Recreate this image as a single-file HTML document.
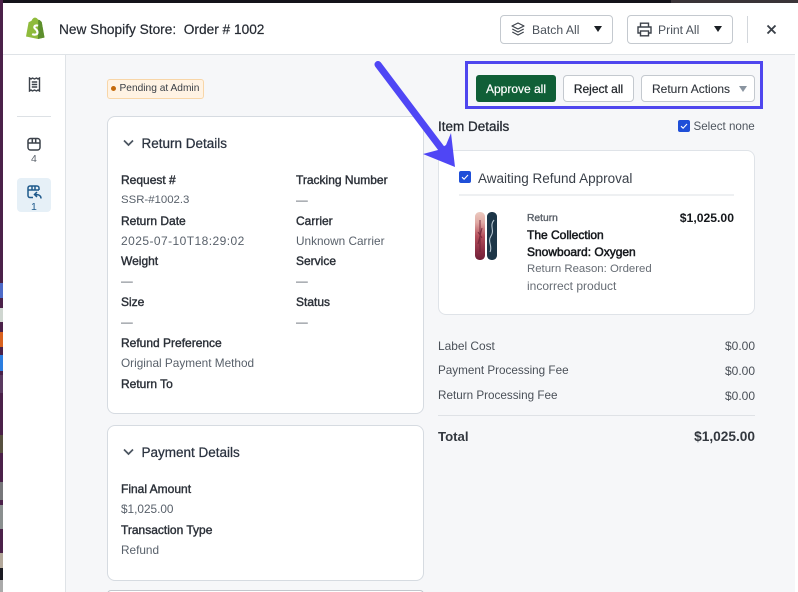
<!DOCTYPE html>
<html>
<head>
<meta charset="utf-8">
<style>
html,body{margin:0;padding:0;width:798px;height:592px;overflow:hidden;background:#fff}
body{position:relative;font-family:"Liberation Sans",Arial,sans-serif;color:#20252c}
.a{position:absolute;white-space:nowrap}
.t{position:absolute;white-space:nowrap;line-height:16px;font-size:12px}
.l{color:#2b3038;font-size:12px;-webkit-text-stroke:.4px #2b3038}
.v{color:#59616b;font-size:11.800px}
.card{position:absolute;background:#fff;border:1px solid #d6dbe1;border-radius:8px;box-sizing:border-box}
.btn{position:absolute;box-sizing:border-box;background:#fff;border:1px solid #c4c9cf;border-radius:4px}
.h{font-size:13.500px;color:#2b3340;font-weight:400;-webkit-text-stroke:.25px #2b3340}
.b{color:#15181c;font-size:12px;-webkit-text-stroke:.5px #15181c}
</style>
</head>
<body>
<!-- backdrop strips -->
<div class="a" style="left:0;top:0;width:798px;height:3px;background:#14131a"></div>
<div class="a" style="left:671px;top:0;width:127px;height:3px;background:#3a3438"></div>
<div class="a" style="left:0;top:0;width:3px;height:592px;background:#4b2149"></div>
<div class="a" style="left:0;top:283px;width:3px;height:15px;background:#4e6bc8"></div>
<div class="a" style="left:0;top:308px;width:3px;height:14px;background:#cfd6d0"></div>
<div class="a" style="left:0;top:332px;width:3px;height:15px;background:#d9621e"></div>
<div class="a" style="left:0;top:355px;width:3px;height:16px;background:#2c7ee0"></div>
<div class="a" style="left:0;top:375px;width:3px;height:18px;background:#5a3a60"></div>
<div class="a" style="left:0;top:435px;width:3px;height:18px;background:#57503f"></div>
<div class="a" style="left:0;top:482px;width:3px;height:18px;background:#77777a"></div>
<div class="a" style="left:0;top:505px;width:3px;height:24px;background:#8a8f8f"></div>
<div class="a" style="left:0;top:553px;width:3px;height:15px;background:#b3a89a"></div>
<div class="a" style="left:0;top:568px;width:3px;height:12px;background:#1a1a22"></div>
<div class="a" style="left:0;top:580px;width:3px;height:12px;background:#aaa"></div>

<!-- modal -->
<div class="a" style="left:3px;top:3px;width:792px;height:600px;background:#f6f7f9;border-radius:6px 6px 0 0;overflow:hidden">
  <div class="a" style="left:0;top:0;width:792px;height:51px;background:#fff;border-bottom:1px solid #dfe3e7;box-sizing:content-box"></div>
  <div class="a" style="left:0;top:52px;width:62px;height:560px;background:#fff;border-right:1px solid #dfe3e7"></div>
</div>

<!-- header -->
<svg class="a" style="left:25px;top:17px" width="21" height="23" viewBox="0 0 21 23">
  <path d="M1 19.500 3.600 5.200C5 4.600 6 4.200 6.600 3.600 7.600 1.200 9 .4 10.300 .6 11.600 .8 12.600 1.600 13.100 2.800L14.600 3 16.700 5 19.500 20.500 13 22Z" fill="#8fbb3c"/>
  <path d="M13.200 2.800 14.700 3.100 16.700 5 19.500 20.500 13 22Z" fill="#5d8f2d"/>
  <path d="M13 8.800C12 8.300 9.600 8.200 9.300 10.100 9 12 12.800 12.300 12.500 15.600 12.300 17.600 9.600 18.300 7.200 17.100" fill="none" stroke="#fff" stroke-width="2.100"/>
</svg>
<div class="t" style="left:59px;top:21px;font-size:13.700px;line-height:18px;color:#262b33;-webkit-text-stroke:.2px #262b33">New Shopify Store:&nbsp; Order # 1002</div>

<div class="btn" style="left:500px;top:15px;width:113px;height:29px"></div>
<svg class="a" style="left:511px;top:22px" width="14" height="14" viewBox="0 0 14 14" fill="none" stroke="#3c424a" stroke-width="1.200" stroke-linejoin="round"><path d="M7 1 13 4 7 7 1 4Z"/><path d="M1.300 7 7 10 12.700 7"/><path d="M1.300 10 7 13 12.700 10"/></svg>
<div class="t" style="left:532px;top:22px;font-size:12.200px;color:#4b525b">Batch All</div>
<div class="a" style="left:594px;top:26px;width:0;height:0;border-left:4.500px solid transparent;border-right:4.500px solid transparent;border-top:6px solid #1b1f24"></div>

<div class="btn" style="left:627px;top:15px;width:106px;height:29px"></div>
<svg class="a" style="left:637px;top:22px" width="15" height="15" viewBox="0 0 15 15" fill="none" stroke="#3c424a" stroke-width="1.400"><path d="M3.500 5V1.200H11.500V5"/><path d="M3.500 11H1V5H14V11H11.500"/><rect x="3.500" y="9" width="8" height="4.800"/></svg>
<div class="t" style="left:658px;top:22px;font-size:12.200px;color:#4b525b">Print All</div>
<div class="a" style="left:714px;top:26px;width:0;height:0;border-left:4.500px solid transparent;border-right:4.500px solid transparent;border-top:6px solid #1b1f24"></div>

<div class="a" style="left:747px;top:16px;width:1px;height:27px;background:#d3d7dc"></div>
<svg class="a" style="left:766px;top:24px" width="11" height="11" viewBox="0 0 11 11" stroke="#3a4048" stroke-width="1.900" fill="none"><path d="M1.500 1.500 9.500 9.500M9.500 1.500 1.500 9.500"/></svg>

<!-- sidebar -->
<svg class="a" style="left:28px;top:77px" width="13" height="15" viewBox="0 0 13 15" fill="none" stroke="#3c424a" stroke-width="1.400"><path d="M1.500 1 3 2 4.500 1 6.500 2 8.500 1 10 2 11.500 1V14L10 13 8.500 14 6.500 13 4.500 14 3 13 1.500 14Z"/><path d="M3.800 5H9.200M3.800 7.500H9.200M3.800 10H9.200"/></svg>
<div class="a" style="left:17px;top:116px;width:34px;height:1px;background:#dde1e5"></div>
<svg class="a" style="left:27px;top:137px" width="14" height="14" viewBox="0 0 14 14" fill="none" stroke="#3c424a" stroke-width="1.500"><rect x="1" y="1.500" width="12" height="11.500" rx="2.500"/><path d="M1 6H13M5.300 1.500V6M8.700 1.500V6"/></svg>
<div class="t" style="left:31px;top:152px;font-size:10.500px;line-height:14px;color:#5c636c">4</div>
<div class="a" style="left:17px;top:178px;width:34px;height:34px;background:#e6f0f7;border-radius:4px"></div>
<svg class="a" style="left:27px;top:185px" width="15" height="15" viewBox="0 0 15 15" fill="none" stroke="#1f5a8c" stroke-width="1.500"><path d="M6 12.500H3A2 2 0 0 1 1 10.500V3A2 2 0 0 1 3 1H10A2 2 0 0 1 12 3V5"/><path d="M1 5H12M5 1V5M8 1V5"/><path d="M14 13.500C14 10.500 12 9.500 8 9.500M10 7 7.500 9.500 10 12"/></svg>
<div class="t" style="left:31px;top:200px;font-size:10.500px;line-height:14px;color:#1f5a8c">1</div>

<!-- pending badge -->
<div class="a" style="left:107px;top:79px;width:97px;height:20px;box-sizing:border-box;background:#fff3e4;border:1px solid #f8d6a8;border-radius:3px"></div>
<div class="a" style="left:111px;top:86px;width:5px;height:5px;border-radius:50%;background:#c46a0c"></div>
<div class="t" style="left:119.500px;top:81px;font-size:10.200px;color:#3a3f46">Pending at Admin</div>

<!-- Return details card -->
<div class="card" style="left:107px;top:116px;width:317px;height:298px"></div>
<svg class="a" style="left:123px;top:139px" width="11" height="8" viewBox="0 0 11 8" fill="none" stroke="#4b5560" stroke-width="1.700"><path d="M1 1.500 5.500 6 10 1.500"/></svg>
<div class="t h" style="left:141.500px;top:136px">Return Details</div>
<div class="t l" style="left:121px;top:172px">Request #</div>
<div class="t v" style="left:121px;top:192px;font-size:11.400px">SSR-#1002.3</div>
<div class="t l" style="left:121px;top:213px">Return Date</div>
<div class="t v" style="left:121px;top:233px;font-size:12px;letter-spacing:.44px">2025-07-10T18:29:02</div>
<div class="t l" style="left:121px;top:253px">Weight</div>
<div class="t v" style="left:121px;top:273px">—</div>
<div class="t l" style="left:121px;top:294px">Size</div>
<div class="t v" style="left:121px;top:314px">—</div>
<div class="t l" style="left:121px;top:335px">Refund Preference</div>
<div class="t v" style="left:121px;top:355px">Original Payment Method</div>
<div class="t l" style="left:121px;top:376px">Return To</div>
<div class="t l" style="left:296px;top:172px">Tracking Number</div>
<div class="t v" style="left:296px;top:192px">—</div>
<div class="t l" style="left:296px;top:213px">Carrier</div>
<div class="t v" style="left:296px;top:233px">Unknown Carrier</div>
<div class="t l" style="left:296px;top:253px">Service</div>
<div class="t v" style="left:296px;top:273px">—</div>
<div class="t l" style="left:296px;top:294px">Status</div>
<div class="t v" style="left:296px;top:314px">—</div>

<!-- Payment card -->
<div class="card" style="left:107px;top:425px;width:317px;height:156px"></div>
<svg class="a" style="left:123px;top:448px" width="11" height="8" viewBox="0 0 11 8" fill="none" stroke="#4b5560" stroke-width="1.700"><path d="M1 1.500 5.500 6 10 1.500"/></svg>
<div class="t h" style="left:141.500px;top:445px">Payment Details</div>
<div class="t l" style="left:121px;top:481px">Final Amount</div>
<div class="t v" style="left:121px;top:501px">$1,025.00</div>
<div class="t l" style="left:121px;top:522px">Transaction Type</div>
<div class="t v" style="left:121px;top:542px">Refund</div>
<div class="a" style="left:107px;top:590px;width:317px;height:8px;background:#fff;border:1px solid #c2c7cd;border-radius:6px;box-sizing:border-box"></div>

<!-- purple highlight -->
<div class="a" style="left:465px;top:61px;width:298px;height:48px;box-sizing:border-box;border:3px solid #4f46ee"></div>
<div class="a" style="left:476px;top:75px;width:80px;height:27px;background:#105f37;border-radius:3px"></div>
<div class="t" style="left:476px;top:81px;width:80px;text-align:center;color:#fff;font-size:12px;-webkit-text-stroke:.2px #fff">Approve all</div>
<div class="btn" style="left:563px;top:75px;width:71px;height:27px"></div>
<div class="t" style="left:563px;top:81px;width:71px;text-align:center;color:#22262b;font-size:12px;-webkit-text-stroke:.25px #22262b">Reject all</div>
<div class="btn" style="left:641px;top:75px;width:114px;height:27px"></div>
<div class="t" style="left:652px;top:81px;color:#2e333a;font-size:12px;-webkit-text-stroke:.1px #2e333a">Return Actions</div>
<div class="a" style="left:739px;top:86px;width:0;height:0;border-left:4px solid transparent;border-right:4px solid transparent;border-top:6px solid #8a94a0"></div>

<!-- item details -->
<div class="t h" style="left:438px;top:119px;font-size:13.500px;color:#262b33;-webkit-text-stroke:.3px #262b33">Item Details</div>
<svg class="a" style="left:678px;top:120px" width="12" height="12" viewBox="0 0 12 12"><rect width="12" height="12" rx="2" fill="#1f4fd8"/><path d="M3 6.200 5.100 8.200 9 4" fill="none" stroke="#fff" stroke-width="1.100"/></svg>
<div class="t" style="left:693.500px;top:119px;font-size:11.600px;color:#4e555e">Select none</div>

<div class="card" style="left:438px;top:150px;width:317px;height:165px;border-color:#dfe3e8"></div>
<svg class="a" style="left:459px;top:171px" width="12" height="12" viewBox="0 0 12 12"><rect width="12" height="12" rx="2" fill="#1f4fd8"/><path d="M3 6.200 5.100 8.200 9 4" fill="none" stroke="#fff" stroke-width="1.100"/></svg>
<div class="t" style="left:478px;top:171px;font-size:13.500px;color:#3a4049">Awaiting Refund Approval</div>
<div class="a" style="left:459px;top:194px;width:275px;height:2px;background:#eef0f2"></div>

<!-- snowboards -->
<svg class="a" style="left:475px;top:212px" width="23" height="48" viewBox="0 0 23 48">
  <defs><linearGradient id="g" x1="0" y1="0" x2="0" y2="1"><stop offset="0" stop-color="#eccabf"/><stop offset=".22" stop-color="#e0a9a4"/><stop offset=".5" stop-color="#b5505c"/><stop offset=".8" stop-color="#8c2f45"/><stop offset="1" stop-color="#6f2138"/></linearGradient></defs>
  <rect x="0" y="0" width="10" height="48" rx="4.500" fill="url(#g)"/>
  <rect x="12" y="0" width="10" height="48" rx="4.500" fill="#1d3648"/>
  <path d="M5 8V40M3 20 7 26M7 16 3 32" stroke="#6e2236" stroke-width="1.100" fill="none" opacity=".8"/>
  <path d="M19 8C14 14 20 18 16 24S18 34 15 40" stroke="#b9c8d2" stroke-width="1.100" fill="none"/>
</svg>

<div class="t" style="left:527px;top:211px;font-size:10.300px;color:#5b6169;-webkit-text-stroke:.35px #5b6169">Return</div>
<div class="t b" style="left:527px;top:227px">The Collection</div>
<div class="t b" style="left:527px;top:244px">Snowboard: Oxygen</div>
<div class="t" style="left:527px;top:261px;font-size:11.400px;color:#666c74">Return Reason: Ordered</div>
<div class="t" style="left:527px;top:278px;font-size:12px;color:#666c74">incorrect product</div>
<div class="t" style="left:634px;top:210px;width:100px;text-align:right;font-size:12.200px;font-weight:700;color:#15181c">$1,025.00</div>

<!-- summary -->
<div class="t" style="left:438px;top:338px;font-size:11.900px;color:#4a5058">Label Cost</div>
<div class="t" style="left:655px;top:338px;width:100px;text-align:right;color:#4a5058">$0.00</div>
<div class="t" style="left:438px;top:363px;font-size:11.700px;color:#4a5058">Payment Processing Fee</div>
<div class="t" style="left:655px;top:363px;width:100px;text-align:right;color:#4a5058">$0.00</div>
<div class="t" style="left:438px;top:388px;font-size:11.700px;color:#4a5058">Return Processing Fee</div>
<div class="t" style="left:655px;top:388px;width:100px;text-align:right;color:#4a5058">$0.00</div>
<div class="a" style="left:438px;top:415px;width:317px;height:1px;background:#dfe2e6"></div>
<div class="t" style="left:438px;top:429px;font-size:13.200px;font-weight:700;color:#33383f">Total</div>
<div class="t" style="left:635px;top:429px;width:120px;text-align:right;font-size:13.700px;font-weight:700;color:#33383f">$1,025.00</div>

<!-- arrow -->
<svg class="a" style="left:0;top:0" width="798" height="592" viewBox="0 0 798 592">
  <path d="M378 64.500 444 152" fill="none" stroke="#4f46f5" stroke-width="7" stroke-linecap="round"/>
  <path d="M451 133 455 167 423 154 438 150 446 145Z" fill="#4f46f5"/>
</svg>
</body>
</html>
